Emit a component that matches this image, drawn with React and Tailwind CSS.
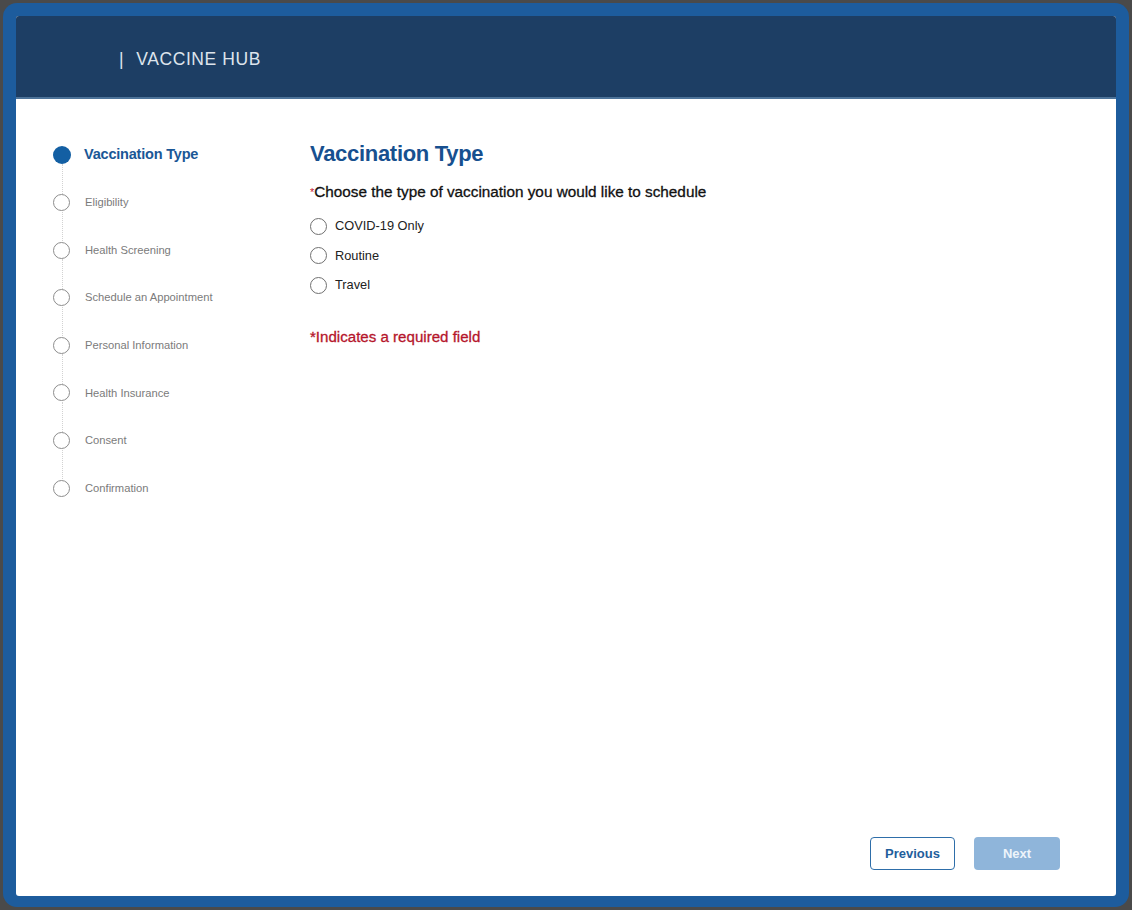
import React, { useState } from 'react';

const steps = [
    'Vaccination Type',
    'Eligibility',
    'Health Screening',
    'Schedule an Appointment',
    'Personal Information',
    'Health Insurance',
    'Consent',
    'Confirmation',
];

const options = ['COVID-19 Only', 'Routine', 'Travel'];

const Stepper = () => (
    <div className="flex flex-col pl-[37px] pt-[47px]">
        {steps.map((step, i) => (
            <div key={step} className="flex flex-col">
                <div className="flex items-center h-[18px]">
                    {i === 0 ? (
                        <span className="w-[18px] h-[18px] rounded-full bg-[#135fa3] shrink-0" />
                    ) : (
                        <span className="w-[17px] h-[17px] rounded-full border-[1.5px] border-[#8d8d8d] bg-white shrink-0" />
                    )}
                    {i === 0 ? (
                        <span className="ml-[13px] text-[14.5px] font-bold text-[#1a5796] tracking-[-0.2px]">{step}</span>
                    ) : (
                        <span className="ml-[15px] text-[11.2px] text-[#7b7b7b]">{step}</span>
                    )}
                </div>
                {i < steps.length - 1 && (
                    <div className="h-[29.6px] w-0 ml-[8.5px] border-l-[1.5px] border-dotted border-[#d2d2d2]" />
                )}
            </div>
        ))}
    </div>
);

export default function App() {
    const [choice, setChoice] = useState(null);

    return (
        <div className="w-[1132px] h-[910px] bg-[#4a4a4a] p-[3px] font-['Liberation_Sans',Arial,sans-serif]">
            <div className="w-full h-full rounded-[14px] bg-[#1d5c9d] pt-[13px] pl-[13px] pr-[13px] pb-[11px]">
                <div className="w-full h-full bg-white flex flex-col rounded-[3px] overflow-hidden">
                    <header className="h-[83px] shrink-0 bg-[#1d3e64] border-b-2 border-[#4d7399] flex items-center pl-[103px] pt-[6px]">
                        <span className="text-[#dde4ec] text-[17.5px] tracking-[0.6px]">
                            <span className="mr-[12px]">|</span>VACCINE HUB
                        </span>
                    </header>

                    <div className="flex flex-1">
                        <aside className="w-[294px] shrink-0">
                            <Stepper />
                        </aside>

                        <main className="flex-1 flex flex-col pt-[41px] pr-[56px] pb-[26px]">
                            <h1 className="text-[22px] leading-[28px] font-bold text-[#17508f] tracking-[-0.3px]">Vaccination Type</h1>
                            <p className="mt-[14px] text-[15.3px] leading-[20px] text-[#111] [-webkit-text-stroke:0.3px_#111]">
                                <span className="text-[#c8102e] text-[11px] align-top [-webkit-text-stroke:0]">*</span>Choose the type of vaccination you would like to schedule
                            </p>

                            <div className="mt-[15px] flex flex-col gap-[11.5px]">
                                {options.map((opt) => (
                                    <label key={opt} className="flex items-center h-[18px] cursor-pointer" onClick={() => setChoice(opt)}>
                                        <span className="w-[17px] h-[17px] rounded-full border-[1.5px] border-[#707070] bg-white flex items-center justify-center shrink-0">
                                            {choice === opt && <span className="w-[9px] h-[9px] rounded-full bg-[#135fa3]" />}
                                        </span>
                                        <span className="ml-[8px] text-[12.8px] text-[#222]">{opt}</span>
                                    </label>
                                ))}
                            </div>

                            <p className="mt-[33px] text-[15.1px] leading-[20px] text-[#b5152b] [-webkit-text-stroke:0.3px_#b5152b]">*Indicates a required field</p>

                            <div className="mt-auto flex justify-end gap-[19px]">
                                <button className="w-[85px] h-[33px] rounded-[4px] border-[1.5px] border-[#2e6ea9] bg-white text-[#1f5e9c] text-[13px] font-bold">Previous</button>
                                <button className="w-[86px] h-[33px] rounded-[4px] bg-[#8fb5da] text-[#eef4fa] text-[13px] font-bold">Next</button>
                            </div>
                        </main>
                    </div>
                </div>
            </div>
        </div>
    );
}
